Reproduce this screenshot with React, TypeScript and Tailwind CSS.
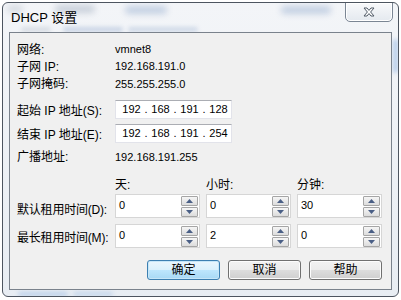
import React from "react";

const F = "font-['Liberation_Sans','Noto_Sans_CJK_SC',sans-serif]";

function Up() {
  return (
    <svg width="7" height="4" viewBox="0 0 7 4">
      <polygon points="0,4 7,4 3.5,0" fill="#4a5f86" />
    </svg>
  );
}
function Down() {
  return (
    <svg width="7" height="4" viewBox="0 0 7 4">
      <polygon points="0,0 7,0 3.5,4" fill="#4a5f86" />
    </svg>
  );
}

function Spin({ value }: { value: string }) {
  return (
    <div className="w-[85px] h-full border border-[#d6d6d6] bg-white flex shrink-0">
      <div className="flex-1 pl-[3px] pt-[4px] text-[11px] leading-[13px] text-black">{value}</div>
      <div className="flex flex-col justify-center gap-[1px] pr-[1px]">
        <div className="w-[17px] h-[10px] border border-[#a5a5a5] rounded-[1px] bg-gradient-to-b from-[#f6f6f6] to-[#dcdcdc] flex items-center justify-center">
          <Up />
        </div>
        <div className="w-[17px] h-[10px] border border-[#a5a5a5] rounded-[1px] bg-gradient-to-b from-[#f6f6f6] to-[#dcdcdc] flex items-center justify-center">
          <Down />
        </div>
      </div>
    </div>
  );
}

function IpBox({ parts }: { parts: string[] }) {
  return (
    <div className="w-[117px] h-[19px] bg-white border border-[#e2e3ea] border-t-[#abadb3] flex items-center pl-[4px] text-[11px] leading-none text-black">
      {parts.map((p, i) => (
        <React.Fragment key={i}>
          <span className="w-[23px] text-center">{p}</span>
          {i < 3 && <span className="w-[6px] text-center">.</span>}
        </React.Fragment>
      ))}
    </div>
  );
}

function Btn({ label, def }: { label: string; def?: boolean }) {
  return (
    <div
      className={
        "w-[73px] h-[20px] rounded-[3px] border flex items-center justify-center text-[12px] leading-none text-black " +
        (def
          ? "border-[#3c7fb1] bg-[linear-gradient(#eaf6fd_0%,#d9f0fc_50%,#bee6fd_50%,#a7d9f5_100%)] shadow-[inset_0_0_0_1px_#c6e6f8]"
          : "border-[#707070] bg-[linear-gradient(#f2f2f2_0%,#ebebeb_50%,#dddddd_50%,#cfcfcf_100%)] shadow-[inset_0_0_0_1px_#fcfcfc]")
      }
    >
      {label}
    </div>
  );
}

export default function App() {
  return (
    <div className={"w-[401px] h-[300px] bg-white pl-[2px] pt-[2px] overflow-hidden " + F}>
      <div className="relative w-[397px] h-[295px] rounded-[6px] border border-[#4d5560] bg-gradient-to-b from-[#f3f5f8] to-[#e8edf3] flex flex-col overflow-hidden">
        {/* blurred background behind glass */}
        <span className="absolute left-[52px] top-[2px] w-[40px] h-[8px] rounded bg-[#8c9bb0] opacity-40 blur-[3px]" />
        <span className="absolute left-[122px] top-[3px] w-[42px] h-[8px] rounded bg-[#7f9bc4] opacity-40 blur-[3px]" />
        <span className="absolute left-[278px] top-[3px] w-[50px] h-[8px] rounded bg-[#7f9bc4] opacity-40 blur-[3px]" />
        <span className="absolute left-[4px] top-[2px] w-[16px] h-[8px] rounded bg-[#9aa6b6] opacity-30 blur-[3px]" />
        <span className="absolute left-[18px] top-[24px] w-[30px] h-[5px] rounded bg-[#9aa6b6] opacity-30 blur-[2px]" />
        <span className="absolute left-[60px] top-[24px] w-[60px] h-[5px] rounded bg-[#7f9bc4] opacity-35 blur-[2px]" />
        <span className="absolute left-[125px] top-[24px] w-[70px] h-[5px] rounded bg-[#7f9bc4] opacity-30 blur-[2px]" />
        <span className="absolute right-[0px] top-[36px] w-[5px] h-[34px] rounded bg-[#8fb3e0] opacity-60 blur-[2px]" />
        <span className="absolute left-[15px] bottom-[0px] w-[50px] h-[4px] rounded bg-[#8fb3e0] opacity-50 blur-[2px]" />
        <span className="absolute left-[70px] bottom-[0px] w-[40px] h-[4px] rounded bg-[#8fb3e0] opacity-40 blur-[2px]" />

        {/* close button */}
        <div className="absolute top-[-1px] right-[5px] w-[48px] h-[20px] rounded-b-[5px] border border-[#7b8694] bg-gradient-to-b from-[#f8f9fb] to-[#e4e9ef] shadow-[inset_0_0_0_1px_#ffffff] flex items-center justify-center">
          <svg width="12" height="10" viewBox="0 0 12 10">
            <polygon
              points="1,1 4,1 6,3.4 8,1 11,1 7.6,5 11,9 8,9 6,6.6 4,9 1,9 4.4,5"
              fill="#ffffff"
              stroke="#505a66"
              strokeWidth="1"
              strokeLinejoin="round"
            />
          </svg>
        </div>

        {/* title */}
        <div className="relative h-[29px] pl-[8px] flex items-center text-[13px] leading-none text-black">
          DHCP 设置
        </div>

        {/* client area */}
        <div className="relative ml-[6px] w-[383px] h-[258px] border border-[#7a828c] bg-[#f0f0f0] flex flex-col pl-[7px] pt-[8px] text-black">
          <div className="h-[17px] flex items-center">
            <div className="w-[98px] text-[12px] leading-none">网络:</div>
            <div className="text-[11px] leading-none">vmnet8</div>
          </div>
          <div className="h-[17px] flex items-center">
            <div className="w-[98px] text-[12px] leading-none">子网 IP:</div>
            <div className="text-[11px] leading-none">192.168.191.0</div>
          </div>
          <div className="h-[18px] flex items-center">
            <div className="w-[98px] text-[12px] leading-none">子网掩码:</div>
            <div className="text-[11px] leading-none">255.255.255.0</div>
          </div>
          <div className="mt-[7px] h-[19px] flex items-center">
            <div className="w-[98px] text-[12px] leading-none pt-[2px] whitespace-nowrap">起始 IP 地址(S):</div>
            <IpBox parts={["192", "168", "191", "128"]} />
          </div>
          <div className="mt-[5px] h-[19px] flex items-center">
            <div className="w-[98px] text-[12px] leading-none pt-[2px] whitespace-nowrap">结束 IP 地址(E):</div>
            <IpBox parts={["192", "168", "191", "254"]} />
          </div>
          <div className="mt-[5px] h-[18px] flex items-center">
            <div className="w-[98px] text-[12px] leading-none">广播地址:</div>
            <div className="text-[11px] leading-none">192.168.191.255</div>
          </div>
          <div className="mt-[11px] h-[16px] flex items-center text-[12px] leading-none">
            <div className="w-[98px]" />
            <div className="w-[91px]">天:</div>
            <div className="w-[91px]">小时:</div>
            <div>分钟:</div>
          </div>
          <div className="mt-[1px] h-[24px] flex items-center gap-[6px]">
            <div className="w-[92px] shrink-0 text-[12px] leading-none pt-[7px] whitespace-nowrap tracking-[-0.2px]">默认租用时间(D):</div>
            <Spin value="0" />
            <Spin value="0" />
            <Spin value="30" />
          </div>
          <div className="mt-[6px] h-[24px] flex items-center gap-[6px]">
            <div className="w-[92px] shrink-0 text-[12px] leading-none pt-[3px] whitespace-nowrap tracking-[-0.2px]">最长租用时间(M):</div>
            <Spin value="0" />
            <Spin value="2" />
            <Spin value="0" />
          </div>
          <div className="mt-[12px] h-[20px] flex justify-end gap-[8px] pr-[9px]">
            <Btn label="确定" def />
            <Btn label="取消" />
            <Btn label="帮助" />
          </div>
        </div>
      </div>
    </div>
  );
}
